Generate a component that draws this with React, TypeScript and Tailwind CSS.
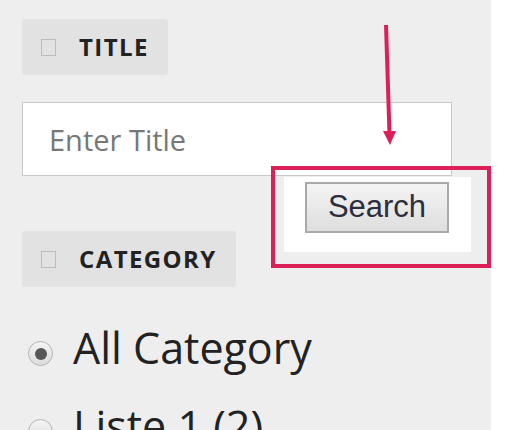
const SectionLabel = ({ label }: { label: string }) => (
  <div className="inline-flex h-[56px] shrink-0 items-center rounded-[3px] bg-[#e2e2e2] pl-[19px] pr-[19px]">
    <span className="h-[17px] w-[15px] border border-[#bcbcbc]" />
    <span className="ml-[23px] text-[24px] font-bold leading-none tracking-[1.4px] text-[#222]">{label}</span>
  </div>
);

const RadioRow = ({ label, checked }: { label: string; checked?: boolean }) => (
  <div className="flex h-[52px] shrink-0 items-start">
    <span className="ml-[6px] mt-[19px] flex h-[25px] w-[25px] shrink-0 items-center justify-center rounded-full border border-[#b4b4b4] bg-gradient-to-b from-[#f4f4f4] to-[#dcdcdc]">
      {checked && <span className="h-[12px] w-[12px] rounded-full bg-[#575757]" />}
    </span>
    <span className="ml-[20px] whitespace-nowrap text-[43px] leading-[52px] text-[#222]">{label}</span>
  </div>
);

export default function App() {
  return (
    <div className="relative flex h-[430px] w-[517px] overflow-hidden bg-white font-['Open_Sans',sans-serif]">
      <div className="flex w-[491px] flex-col items-start bg-[#eeeeee] pl-[22px] pt-[19px]">
        <SectionLabel label="TITLE" />
        <input
          type="text"
          placeholder="Enter Title"
          className="mt-[27px] h-[74px] w-[430px] shrink-0 border border-[#c8c8c8] bg-white px-[26px] text-[29px] text-[#333] outline-none placeholder:text-[#777]"
        />
        <div className="mt-[55px] shrink-0">
          <SectionLabel label="CATEGORY" />
        </div>
        <div className="mt-[35px] flex shrink-0 flex-col gap-[26px]">
          <RadioRow label="All Category" checked />
          <RadioRow label="Liste 1 (2)" />
        </div>
      </div>

      {/* annotation: highlighted search button */}
      <div className="absolute left-[271px] top-[166px] h-[102px] w-[220px] border-4 border-[#dc1f56]" />
      <div className="absolute left-[284px] top-[177px] flex h-[75px] w-[187px] items-start bg-white">
        <button className="ml-[21px] mt-[5px] flex h-[51px] w-[144px] items-center justify-center border-2 border-[#a9a9a9] bg-gradient-to-b from-[#f4f4f4] to-[#dedede] font-['Liberation_Sans',Arial,sans-serif] text-[31px] text-[#2d2d3c]">
          Search
        </button>
      </div>

      {/* annotation arrow */}
      <svg className="pointer-events-none absolute left-0 top-0" width="517" height="430">
        <line x1="386" y1="25" x2="389.5" y2="134" stroke="#dc1f56" strokeWidth="4" />
        <polygon points="383,131 396,131 390,145" fill="#dc1f56" />
      </svg>
    </div>
  );
}
